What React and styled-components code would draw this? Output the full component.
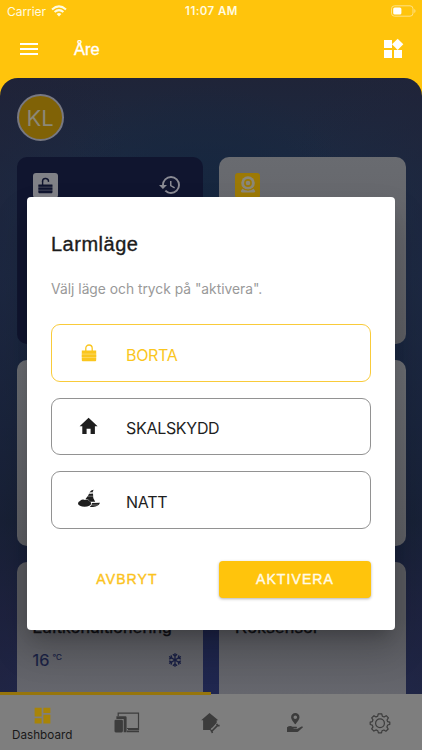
import React from "react"
import styled, { createGlobalStyle } from "styled-components"
import { MdMenu, MdWidgets, MdHistory, MdDashboard } from "react-icons/md"
import { FaRegSnowflake } from "react-icons/fa"

const GlobalStyle = createGlobalStyle`
  * {
    box-sizing: border-box;
  }

  body {
    margin: 0;
    font-family: Inter, 'Liberation Sans', sans-serif;
    background: #ffc40c;
    overflow: hidden;
  }
`

const Screen = styled.div`
  position: relative;
  display: flex;
  flex-direction: column;
  width: 422px;
  height: 750px;
  overflow: hidden;
  background: #ffc40c;
`

const StatusBar = styled.div`
  display: grid;
  grid-template-columns: 1fr auto 1fr;
  align-items: center;
  height: 22px;
  padding: 0 6px 0 7px;
  color: #fffbe0;
  font-size: 12px;
`

const Carrier = styled.div`
  display: flex;
  align-items: center;
  gap: 5px;
  letter-spacing: -0.05px;
`

const Clock = styled.div`
  font-weight: 600;
  font-size: 11.5px;
  letter-spacing: 0.45px;
`

const Battery = styled.svg`
  justify-self: end;
`

const TopBar = styled.header`
  display: flex;
  align-items: center;
  height: 56px;
  padding: 0 17px 2px;
  color: white;
`

const Place = styled.h1`
  flex: 1;
  margin: 0 0 0 33px;
  font: 400 16.5px 'Liberation Sans', sans-serif;
  -webkit-text-stroke: 0.35px white;
`

const Panel = styled.main`
  flex: 1;
  min-height: 0;
  padding: 16px 16.5px 0;
  border-radius: 18px 18px 0 0;
  overflow: hidden;
  background:
    radial-gradient(ellipse 150px 110px at 48% 19%, #16263e 0%, rgba(22, 38, 62, 0) 100%),
    linear-gradient(90deg, rgba(32, 34, 56, 0.5) 0%, rgba(24, 45, 73, 0) 30%, rgba(24, 45, 73, 0) 70%, rgba(32, 36, 58, 0.5) 100%),
    linear-gradient(180deg, #1f2438 0%, #1b2b44 16%, #192c48 32%, #13243d 56%, #101e33 72%, #1a2142 86%, #202750 100%);
`

const Avatar = styled.div`
  display: flex;
  align-items: center;
  justify-content: center;
  width: 47px;
  height: 47px;
  margin-bottom: 16px;
  border: 2px solid #777882;
  border-radius: 50%;
  background: #806206;
  color: #8c8878;
  font-size: 22px;
`

const Cards = styled.div`
  display: grid;
  grid-template-columns: 186.5px 186.5px;
  grid-auto-rows: 186.5px;
  gap: 16px;
`

const Card = styled.section`
  padding: 16px;
  border-radius: 10px;
  background: ${props => props.$dark ? '#10152f' : 'linear-gradient(180deg, #696b70, #5c5d62)'};
`

const AcCard = styled(Card)`
  background: linear-gradient(180deg, #57585d 30%, #67686f 75%);
`

const CardTop = styled.div`
  display: flex;
  justify-content: space-between;
  align-items: flex-start;
  padding-right: 5px;
  color: #8a8b94;
`

const CardTitle = styled.h2`
  margin: 38px 0 0;
  color: #101014;
  font: 400 17px/24px 'Liberation Sans', sans-serif;
  letter-spacing: 0.3px;
  -webkit-text-stroke: 0.4px #101014;
`

const Reading = styled.div`
  display: flex;
  align-items: center;
  justify-content: space-between;
  margin-top: 8px;
  padding-right: 5px;
  color: #191f43;
  font-size: 16.5px;
  line-height: 24px;
  -webkit-text-stroke: 0.2px #191f43;

  sup {
    margin-left: 3px;
    font-size: 8px;
    line-height: 0;
  }
`

const TabBar = styled.nav`
  position: relative;
  display: grid;
  grid-template-columns: repeat(5, 1fr);
  height: 56px;
  background: #7e7e7e;
  color: #3c3c3c;
`

const Indicator = styled.div`
  position: absolute;
  top: -2px;
  left: 0;
  width: 211px;
  height: 3px;
  background: #96750c;
`

const Tab = styled.div`
  display: flex;
  flex-direction: column;
  align-items: center;
  justify-content: center;
  gap: 2px;
  padding-top: 1px;
  color: #191919;
  font-size: 11.7px;

  .dash {
    margin-top: 1px;
    color: #a88408;
  }
`

const Dialog = styled.div`
  position: absolute;
  top: 197px;
  left: 27px;
  width: 368px;
  height: 433px;
  padding: 33px 24px 32px;
  border-radius: 4px;
  background: white;
  box-shadow: 0 11px 15px -7px rgba(0, 0, 0, 0.2), 0 20px 34px 2px rgba(0, 0, 0, 0.15);
`

const DialogTitle = styled.h2`
  margin: 0;
  color: #1c1c1c;
  font: 400 20px/28px 'Liberation Sans', sans-serif;
  letter-spacing: 0.5px;
  -webkit-text-stroke: 0.35px #1c1c1c;
`

const Hint = styled.p`
  margin: 21px 0 25px;
  color: #999;
  font-size: 13.8px;
  line-height: 20px;
`

const Options = styled.div`
  display: flex;
  flex-direction: column;
  gap: 16px;
`

const Option = styled.div`
  display: flex;
  align-items: center;
  height: 57.5px;
  padding: 4px 0 0 23px;
  border: 1px solid ${props => props.$active ? '#f9cb3a' : '#929292'};
  border-radius: 9px;
  color: ${props => props.$active ? '#fac61e' : '#1e1e1e'};
  font-size: 16px;
  letter-spacing: -0.3px;

  svg {
    margin: -4px 23px 0 0;
  }
`

const Actions = styled.div`
  display: grid;
  grid-template-columns: 1fr 1fr;
  gap: 16px;
  margin-top: 32px;
`

const Button = styled.button`
  height: 37px;
  padding: 0 0 1px;
  border: 0;
  border-radius: 4px;
  background: ${props => props.$filled ? '#ffc40c' : 'transparent'};
  box-shadow: ${props => props.$filled ? '0 1px 3px rgba(0, 0, 0, 0.3)' : 'none'};
  color: ${props => props.$filled ? '#fffbe8' : '#fbc31d'};
  font: 400 14px 'Liberation Sans', sans-serif;
  letter-spacing: 1.1px;
  -webkit-text-stroke: 0.4px currentColor;
`

const WifiIcon = () => <svg width="16" height="12" viewBox="0 0 16 12" fill="none" stroke="currentColor" strokeWidth="2">
  <path d="M1 4.4Q8-1.6 15 4.4" />
  <path d="M3.6 7.1Q8 3.1 12.4 7.1" />
  <path d="M5.6 9Q8 7 10.4 9L8 11.6z" fill="currentColor" stroke="none" />
</svg>

const BatteryIcon = () => <Battery width="25" height="12" viewBox="0 0 25 12">
  <rect x="0.5" y="0.8" width="21.5" height="10.4" rx="3" fill="none" stroke="#ffe184" />
  <rect x="2.2" y="2.5" width="8.2" height="7" rx="1.5" fill="white" />
  <path d="M23.3 4v4q1.2-.7 1.2-2t-1.2-2" fill="#ffe184" />
</Battery>

const UnlockedIcon = () => <svg width="25" height="25" viewBox="0 0 25 25">
  <rect width="25" height="25" rx="3" fill="#808187" />
  <path d="M9.4 9V8.4a3 3 0 0 1 6 0" fill="none" stroke="#10152f" strokeWidth="1.4" transform="rotate(8 12 9)" />
  <path d="M9.6 8v4" stroke="#10152f" strokeWidth="1.4" />
  <path d="M5.4 11.5h14v2.3h-14zM5.4 14.6h14v2.1h-14zM5.4 17.4h14v2.2q0 .7-.7.7H6.1q-.7 0-.7-.7z" fill="#10152f" />
  <path d="M5.4 12h14v7h-14z" fill="#10152f" opacity=".4" />
</svg>

const CameraIcon = () => <svg width="25" height="25" viewBox="0 0 25 25">
  <rect width="25" height="25" rx="3" fill="#9c7905" />
  <circle cx="13" cy="10" r="6.8" fill="#8b8778" />
  <circle cx="13" cy="10" r="3.1" fill="none" stroke="#9c7905" strokeWidth="1.6" />
  <path d="M7.5 15.5q5.5 3.5 11 0l1.5 2.2q.8 1.8-1.2 1.8H7.2q-2 0-1.2-1.8z" fill="#8b8778" />
  <path d="M7.5 15.2q5.5 3.8 11 0" fill="none" stroke="#9c7905" />
</svg>

const LockIcon = () => <svg width="28" height="24" viewBox="0 0 28 24" fill="currentColor">
  <path d="M10.8 10V7.2a3.2 3.2 0 0 1 6.4 0V10" fill="none" stroke="currentColor" strokeWidth="1.3" />
  <path d="M6.8 9.6h14.4v3.2H6.8zM6.8 13.6h14.4v2.7H6.8zM6.8 17.1h14.4v2.2q0 .9-.9.9H7.7q-.9 0-.9-.9z" />
  <path d="M6.8 12.3h14.4v5H6.8z" opacity=".65" />
</svg>

const HouseIcon = () => <svg width="28" height="24" viewBox="0 0 28 24" fill="currentColor">
  <path d="M13.6 3.7 4.6 12.2h2.7V20h4.3v-5.3h4V20h4.3v-7.8h2.7z" />
</svg>

const HatIcon = () => <svg width="28" height="24" viewBox="0 0 28 24" fill="currentColor">
  <ellipse cx="9.6" cy="15.4" rx="6.6" ry="3.4" />
  <circle cx="8" cy="14.6" r="3" />
  <circle cx="11.5" cy="14.2" r="2.6" />
  <path d="M10.6 10.7Q13.2 8.5 14 5.8l4-.6q-.6 4.3 2.2 8.5h-5.1q-1.2-2.4-4.5-3zM14.4 4.6q1.6-2.8 4.3-2.8l-1 1.8.6.7zM17.2 15l7.8-.3q-1.5 4-7 4.2h-3.2q2-1.6 2.4-3.9z" />
  <path d="M15 5.2h4" stroke="white" strokeWidth=".6" />
  <path d="M13 8.2h6M16 17h7" stroke="white" strokeWidth=".4" />
</svg>

const DevicesIcon = () => <svg width="26" height="22" viewBox="0 0 26 22" fill="#3c3c3c">
  <path d="M4.2 4V1.2h20.3v16.3H14" fill="none" stroke="#3c3c3c" strokeWidth="1.2" />
  <path d="M13 16h12v1.1H13zM13 18.4h12v1.8H13zM2.4 4.2h9q1.2 0 1.2 1.2v14.8H9.7V7H2.4z" />
  <path d="M1.8 7.7h5.8q1.3 0 1.3 1.2v10.2q0 1.3-1.3 1.3H1.8q-1.3 0-1.3-1.3V8.9q0-1.2 1.3-1.2" />
</svg>

const ServiceIcon = () => <svg width="24" height="24" viewBox="0 0 24 24" fill="#3c3c3c">
  <path d="M10.5 2 2.2 9.3h1.9V19h7.6q0-2 2-2.7l4-4.5V9.3h1.6z" />
  <path d="m12.8 20.2 5.8-5.8M11.6 19.2l1.2 1 .6 1.8M17.6 12.8l1 1.6 2 .2" fill="none" stroke="#3c3c3c" strokeWidth="1.6" />
</svg>

const HandPinIcon = () => <svg width="18" height="22" viewBox="0 0 18 22" fill="#3c3c3c">
  <path fillRule="evenodd" d="M9.3 1a4.2 4.2 0 0 0-4.2 4.2c0 2.8 4.2 7.1 4.2 7.1s4.2-4.3 4.2-7.1A4.2 4.2 0 0 0 9.3 1m0 2.5a1.8 1.8 0 1 1 0 3.6 1.8 1.8 0 0 1 0-3.6" />
  <path d="M1 15.2q3-2.2 5.5-.5h4.1q1.1 1-.3 1.5H7.5v.6h4l4-2.2q1.5-.3 1.5.7l-4.7 4.2q-.8.7-3 .6H1z" />
</svg>

const GearIcon = () => <svg width="22" height="22" viewBox="0 0 22 22" fill="none" stroke="#3c3c3c" strokeWidth="1.2" strokeLinejoin="round">
  <path d="M9.2 1.8h3.6l.5 2.4 1.8.8 2.1-1.3 2.2 2.2L18 8l.7 1.7 2.1.5v2.2l-2.1.6-.8 1.9 1.3 2.1-2.3 2.2-2-1.2-1.9.8-.5 2.1H9.4l-.6-2.2-1.8-.8-2.1 1.2-2.2-2.2L4 14.9l-.8-1.8-2-.6v-2.4l2.1-.5L4 7.8 2.7 5.9 5 3.7 7 4.9l1.7-.7z" />
  <circle cx="11" cy="11.2" r="4.4" />
</svg>

const App = () => <>
  <GlobalStyle />
  <Screen>
    <StatusBar>
      <Carrier>Carrier <WifiIcon /></Carrier>
      <Clock>11:07 AM</Clock>
      <BatteryIcon />
    </StatusBar>
    <TopBar>
      <MdMenu size={24} />
      <Place>Åre</Place>
      <MdWidgets size={24} />
    </TopBar>
    <Panel>
      <Avatar>KL</Avatar>
      <Cards>
        <Card $dark>
          <CardTop>
            <UnlockedIcon />
            <MdHistory size={24} />
          </CardTop>
        </Card>
        <Card>
          <CardTop>
            <CameraIcon />
          </CardTop>
        </Card>
        <Card />
        <Card />
        <AcCard>
          <CardTitle>Luftkonditionering</CardTitle>
          <Reading>
            <span>16<sup>°C</sup></span>
            <FaRegSnowflake size={14} />
          </Reading>
        </AcCard>
        <AcCard>
          <CardTitle>Röksensor</CardTitle>
        </AcCard>
      </Cards>
    </Panel>
    <TabBar>
      <Indicator />
      <Tab><MdDashboard className="dash" size={21} />Dashboard</Tab>
      <Tab><DevicesIcon /></Tab>
      <Tab><ServiceIcon /></Tab>
      <Tab><HandPinIcon /></Tab>
      <Tab><GearIcon /></Tab>
    </TabBar>
    <Dialog>
      <DialogTitle>Larmläge</DialogTitle>
      <Hint>Välj läge och tryck på "aktivera".</Hint>
      <Options>
        <Option $active><LockIcon />BORTA</Option>
        <Option><HouseIcon />SKALSKYDD</Option>
        <Option><HatIcon />NATT</Option>
      </Options>
      <Actions>
        <Button>AVBRYT</Button>
        <Button $filled>AKTIVERA</Button>
      </Actions>
    </Dialog>
  </Screen>
</>

export default App
